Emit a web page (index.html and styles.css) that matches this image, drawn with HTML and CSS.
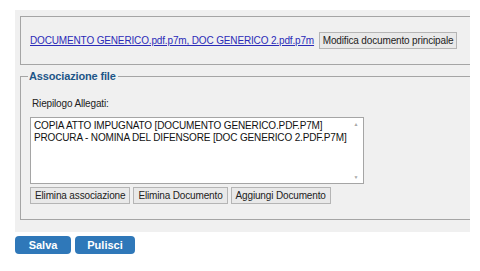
FILE: index.html
```html
<!DOCTYPE html>
<html lang="it">
<head>
  <meta charset="UTF-8">
  <title>Associazione file</title>
  <link rel="stylesheet" href="styles.css">
</head>
<body>
  <div class="panel">
    <fieldset class="box docBox">
      <a href="#" class="docLink">DOCUMENTO GENERICO.pdf.p7m, DOC GENERICO 2.pdf.p7m</a>
      <button class="btn">Modifica documento principale</button>
    </fieldset>
    <fieldset class="box assocBox">
      <legend class="legend">Associazione file</legend>
      <p class="label">Riepilogo Allegati:</p>
      <div class="list">
        <div class="listText">
          COPIA ATTO IMPUGNATO [DOCUMENTO GENERICO.PDF.P7M]<br>
          PROCURA - NOMINA DEL DIFENSORE [DOC GENERICO 2.PDF.P7M]
        </div>
        <div class="scroll">
          <span class="arrow">&#9650;</span>
          <span class="arrow">&#9660;</span>
        </div>
      </div>
      <div class="actions">
        <button class="btn">Elimina associazione</button>
        <button class="btn">Elimina Documento</button>
        <button class="btn">Aggiungi Documento</button>
      </div>
    </fieldset>
  </div>
  <div class="footer">
    <button class="blueBtn">Salva</button>
    <button class="blueBtn">Pulisci</button>
  </div>
</body>
</html>
```

FILE: styles.css
```css
body, html {
  margin: 0;
  background-color: #ffffff;
  font-family: "Liberation Sans", Arial, sans-serif;
  font-size: 10px;
  letter-spacing: -0.15px;
  color: #222222;
}
.panel {
  margin: 10px 10px 0 15px;
  width: 455px;
  height: 222px;
  background-color: #f0f0f0;
  overflow: hidden;
  padding-top: 6px;
  box-sizing: border-box;
}
.box {
  margin: 0 0 0 5px;
  width: 470px;
  border: 1px solid #a5a5a5;
  border-right: none;
  box-sizing: border-box;
}
.docBox {
  height: 49px;
  padding: 15px 0 0 9px;
  white-space: nowrap;
}
.docLink {
  color: #2b2bb8;
}
.btn {
  font-family: "Liberation Sans", Arial, sans-serif;
  font-size: 10px;
  letter-spacing: -0.15px;
  color: #222222;
  background-color: #e9e9e9;
  border: 1px solid #b5b5b5;
  padding: 1px 4px;
  height: 17px;
  margin: 0;
}
.docBox .btn {
  margin-left: 2px;
  padding: 1px 3px;
}
.assocBox {
  margin-top: 5px;
  height: 150px;
  padding: 0 0 0 9px;
}
.legend {
  padding: 0 2px 0 1px;
  margin-left: -2px;
  font-weight: bold;
  color: #1d5688;
  font-size: 11px;
}
.label {
  margin: 16px 0 0 2px;
}
.list {
  margin-top: 8px;
  width: 334px;
  height: 67px;
  background-color: #ffffff;
  border: 1px solid #a5a5a5;
  box-sizing: border-box;
  display: flex;
}
.listText {
  flex: 1;
  padding: 2px 0 0 3px;
  line-height: 12px;
  color: #111111;
}
.scroll {
  width: 14px;
  display: flex;
  flex-direction: column;
  justify-content: space-between;
  align-items: center;
  padding: 3px 0;
}
.arrow {
  font-size: 5px;
  color: #a8a8a8;
}
.actions {
  display: flex;
  gap: 3px;
  margin-top: 3px;
}
.footer {
  display: flex;
  gap: 4px;
  margin: 4px 0 0 15px;
}
.blueBtn {
  width: 56px;
  height: 18px;
  background-color: #2f78b9;
  color: #ffffff;
  border: none;
  border-radius: 4px;
  font-family: "Liberation Sans", Arial, sans-serif;
  font-weight: bold;
  font-size: 11px;
  padding: 0;
}
.blueBtn + .blueBtn {
  width: 60px;
}
```
